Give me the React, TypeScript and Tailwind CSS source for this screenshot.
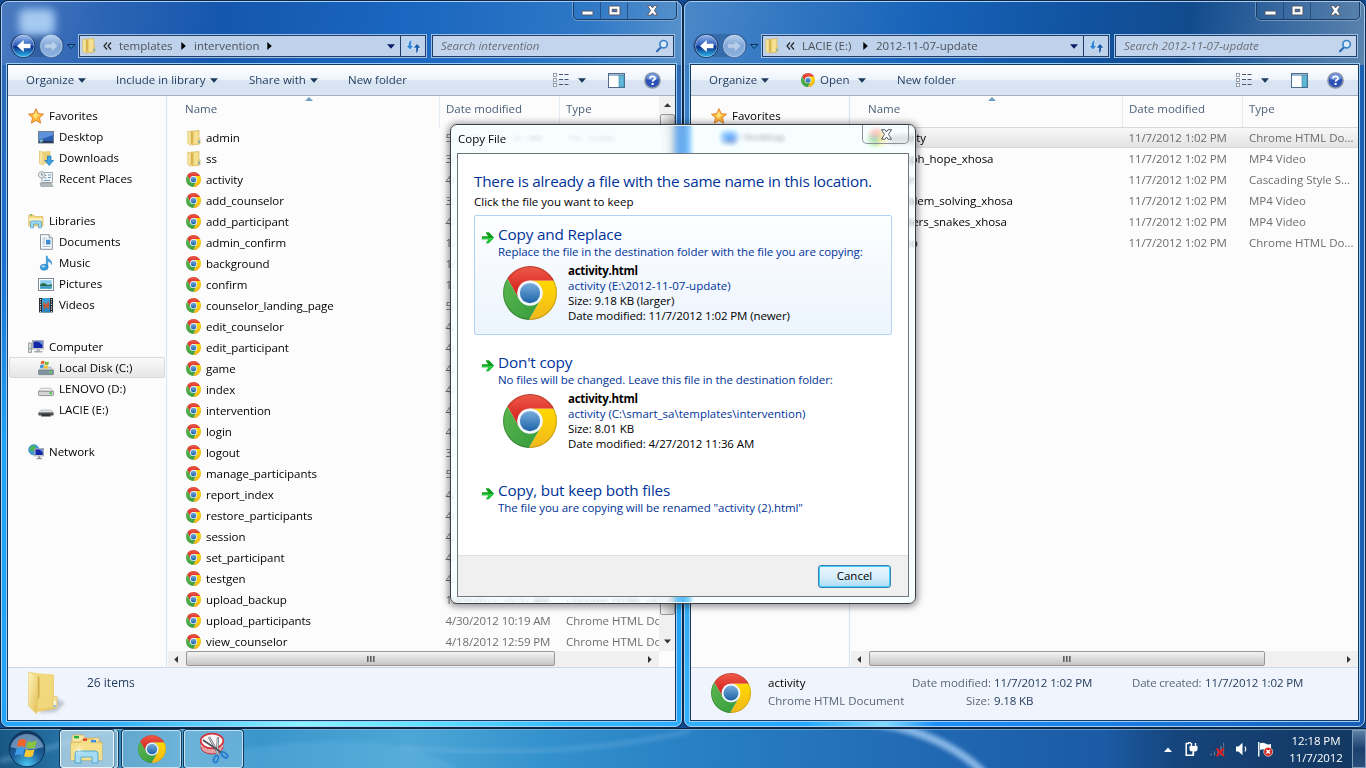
import React from "react";
import type { ReactNode } from "react";

/* ---------- icons ---------- */

function Chrome({ size }: { size: number }) {
  return (
    <svg width={size} height={size} viewBox="0 0 48 48" className="shrink-0">
      <defs>
        <linearGradient id="cr" x1="0" y1="0" x2="0" y2="1">
          <stop offset="0" stopColor="#ee5a48" />
          <stop offset="1" stopColor="#cf1514" />
        </linearGradient>
        <linearGradient id="cy" x1="0" y1="0" x2="0" y2="1">
          <stop offset="0" stopColor="#ffd800" />
          <stop offset="1" stopColor="#f2b81c" />
        </linearGradient>
        <linearGradient id="cg" x1="0" y1="0" x2="1" y2="1">
          <stop offset="0" stopColor="#5cb84f" />
          <stop offset="1" stopColor="#359a3c" />
        </linearGradient>
        <linearGradient id="cb" x1="0" y1="0" x2="0" y2="1">
          <stop offset="0" stopColor="#7aaedc" />
          <stop offset="1" stopColor="#1d63a8" />
        </linearGradient>
      </defs>
      <path d="M3.82 11.05A24 24 0 0 1 45.3 13L24 13A11 11 0 0 0 14.47 29.5Z" fill="url(#cr)" />
      <path d="M45.3 13A24 24 0 0 1 22.88 47.95L33.53 29.5A11 11 0 0 0 24 13Z" fill="url(#cy)" />
      <path d="M22.88 47.95A24 24 0 0 1 3.82 11.05L14.47 29.5A11 11 0 0 0 33.53 29.5Z" fill="url(#cg)" />
      <circle cx="24" cy="24" r="11.2" fill="#f4f7fb" />
      <circle cx="24" cy="24" r="9" fill="url(#cb)" />
      <circle cx="24" cy="24" r="23.5" fill="none" stroke="#00000030" strokeWidth="1" />
    </svg>
  );
}

function Folder({ w = 16, h = 16 }: { w?: number; h?: number }) {
  return (
    <svg width={w} height={h} viewBox="0 0 16 16" className="shrink-0">
      <path d="M5 1.2L13 .6V14L6 15Z" fill="#ecd074" stroke="#cfac4c" strokeWidth=".6" />
      <path d="M8.2 1.5L12.4 1.2V13.5L8.2 14.2Z" fill="#f5e191" />
      <path d="M1.8 1L5.2 1.8V10.5L5 15.3L1.8 13.5Z" fill="#f6e59c" stroke="#d6b658" strokeWidth=".6" />
      <path d="M5.2 1.8L6.8 2.8V12L5.2 14.6Z" fill="#d3ad48" />
      <path d="M12 9.2L14.2 8.8V13.7L12 14.4Z" fill="#f3dd8b" stroke="#cfac4c" strokeWidth=".4" />
      <path d="M13.1 10.4V13.2" stroke="#3b9bdc" strokeWidth="1.1" />
    </svg>
  );
}

function BigFolder() {
  return (
    <svg width="40" height="44" viewBox="0 0 40 44" className="shrink-0">
      <defs>
        <linearGradient id="bf1" x1="0" y1="0" x2="1" y2="1">
          <stop offset="0" stopColor="#fff4c0" />
          <stop offset="1" stopColor="#e2bd4e" />
        </linearGradient>
        <linearGradient id="bf2" x1="0" y1="0" x2="1" y2="1">
          <stop offset="0" stopColor="#f5dd87" />
          <stop offset="1" stopColor="#e7c765" />
        </linearGradient>
        <filter id="bfb"><feGaussianBlur stdDeviation="1.6" /></filter>
      </defs>
      <path d="M28 26L38 32L29 41L12 42Z" fill="#8f97a8" opacity=".5" filter="url(#bfb)" />
      <path d="M2 1L27 4V38L10 41Z" fill="url(#bf2)" />
      <path d="M9 3H26V36L11 38Z" fill="#f2d97f" opacity=".8" />
      <path d="M1.5 1L11 5V28L9.5 43L1.5 35Z" fill="url(#bf1)" stroke="#e6cb72" strokeWidth=".6" />
      <path d="M11 5L12.5 7V26L11 28Z" fill="#cfa943" />
      <path d="M26 26L30 25V36L26 38Z" fill="#f3df94" stroke="#dcc068" strokeWidth=".6" />
      <path d="M27.6 30V36" stroke="#fff" strokeWidth="1.6" />
      <path d="M27.6 34V36" stroke="#57a9e4" strokeWidth="1.6" />
    </svg>
  );
}

function Svg16({ children }: { children: ReactNode }) {
  return (
    <svg width="16" height="16" viewBox="0 0 16 16" className="shrink-0">
      {children}
    </svg>
  );
}

function Drive({ top, side, led }: { top: string; side: string; led: string }) {
  return (
    <>
      <path d="M3.2 7.2H12.8L15.6 10.4H.4Z" fill={top} stroke="#8a8d90" strokeWidth=".5" />
      <rect x=".4" y="10.2" width="15.2" height="4.4" rx="1.2" fill={side} stroke="#6d7073" strokeWidth=".7" />
      <rect x="11.6" y="11.2" width="2.2" height="2" fill={led} />
    </>
  );
}

const navIcons: Record<string, ReactNode> = {
  Favorites: (
    <Svg16>
      <path d="M8 .7L10.2 5.6L15.5 6.2L11.5 9.8L12.6 15.2L8 12.4L3.4 15.2L4.5 9.8L.5 6.2L5.8 5.6Z" fill="#fdb53a" stroke="#e07b26" strokeWidth=".9" />
      <path d="M8 3L9.4 6.5L12.6 7L9 8.2L8 11L5 8Z" fill="#ffe377" />
    </Svg16>
  ),
  Desktop: (
    <Svg16>
      <rect x=".5" y="2.5" width="15" height="11.5" fill="#2c5fb4" stroke="#6f7c8c" />
      <path d="M1 3H15V6L1 11Z" fill="#5c93dc" />
      <rect x="1" y="12" width="14" height="1.8" fill="#26364f" />
      <circle cx="3" cy="12" r="1.5" fill="#77b8d8" />
      <rect x="4" y="10.8" width="1" height="1" fill="#f5d93b" />
    </Svg16>
  ),
  Downloads: (
    <Svg16>
      <path d="M5 1.4L12.5 1V12.5L6 14Z" fill="#ecd074" />
      <path d="M1.5 1L5.2 2.2V15L1.5 13.3Z" fill="#f6e59c" stroke="#d6b658" strokeWidth=".6" />
      <path d="M9.4 6H13V10.5H15.6L11.2 15.5L6.8 10.5H9.4Z" fill="#3fa4e2" stroke="#1b74b5" strokeWidth=".7" />
    </Svg16>
  ),
  "Recent Places": (
    <Svg16>
      <path d="M4 1.5H14.5V11.5H4Z" fill="#f3f6f8" stroke="#8c9499" strokeWidth=".8" />
      <path d="M6.5 4.5H8.5M10 4H13M6.5 7H8.5M10 6.5H13M6 9.5H12" stroke="#6b9dc4" strokeWidth="1.2" />
      <path d="M2 12H13L15 15.4H3Z" fill="#b5bcc0" stroke="#858c90" strokeWidth=".6" />
      <circle cx="3.6" cy="3.8" r="3.2" fill="#e7edf0" stroke="#8a9499" strokeWidth=".8" />
      <path d="M3.6 2V4H5" stroke="#4f5b63" strokeWidth=".7" fill="none" />
    </Svg16>
  ),
  Libraries: (
    <Svg16>
      <path d="M.8 2.2H6L7 3.6H15V13H.8Z" fill="#f1d67a" stroke="#d2ad49" strokeWidth=".6" />
      <path d="M1.5 5H14.5V8H1.5Z" fill="#fcf1bd" />
      <path d="M2 1.8H4" stroke="#46a83c" strokeWidth="1" />
      <path d="M2.5 14.8V9.5Q2.5 8 4 8H12Q13.5 8 13.5 9.5V14.8H10.5V11H5.5V14.8Z" fill="#9ad7f2" stroke="#4a9fc8" strokeWidth=".7" />
    </Svg16>
  ),
  Documents: (
    <Svg16>
      <path d="M2.5 .7H11L14.3 4V15.3H2.5Z" fill="#fbfdff" stroke="#7c8792" strokeWidth=".9" />
      <path d="M11 .7V4H14.3" fill="#dce5ee" stroke="#7c8792" strokeWidth=".7" />
      <path d="M4.5 4H9M4.5 6H7M4.5 8H7M4.5 10H7M4.5 12.5H12.5" stroke="#93a5bb" strokeWidth=".8" />
      <rect x="8" y="5.7" width="4.5" height="4.8" fill="#3b8ad2" />
    </Svg16>
  ),
  Music: (
    <Svg16>
      <path d="M8 .8C9 4 14.5 4.5 13.6 9.5C13 7.5 11.5 6.5 9.8 6.3V12.2" fill="#48a4e0" stroke="#277db9" strokeWidth=".5" />
      <path d="M7.9 .8H9.8V12.5H7.9Z" fill="#48a4e0" />
      <ellipse cx="6.2" cy="12.2" rx="3.9" ry="3" fill="#3b9ee0" stroke="#1d6fae" strokeWidth=".6" />
      <ellipse cx="5.2" cy="11.3" rx="1.8" ry="1.1" fill="#a5d9f7" />
    </Svg16>
  ),
  Pictures: (
    <Svg16>
      <rect x=".5" y="2.5" width="15" height="12" fill="#fff" stroke="#7f8b96" />
      <rect x="2.2" y="4.2" width="11.6" height="8.6" fill="#8fcdee" />
      <path d="M2.2 8L6 7L10 9.3L13.8 8V10.5H2.2Z" fill="#276a4c" />
      <path d="M2.2 10.5H13.8V12.8H2.2Z" fill="#3f9fd0" />
    </Svg16>
  ),
  Videos: (
    <Svg16>
      <rect x="1" y="1" width="14" height="14.4" fill="#20262e" />
      <rect x="4" y="1" width="8" height="7" fill="#3e9fd8" />
      <rect x="4" y="8.4" width="8" height="7" fill="#2d86c0" />
      <path d="M5 5L8 7L11 4V12L8 10L6 13Z" fill="#c05c35" />
      <path d="M2.5 2V15M13.5 2V15" stroke="#d6dde2" strokeWidth="1.2" strokeDasharray="1.2 1.2" />
    </Svg16>
  ),
  Computer: (
    <Svg16>
      <rect x="0.6" y="4" width="3" height="9.5" fill="#d9dde0" stroke="#7f868b" strokeWidth=".7" />
      <rect x="1.4" y="9" width="1.2" height="1.2" fill="#49b14a" />
      <rect x="4.4" y="1.4" width="11.2" height="8.6" fill="#dfe3e6" stroke="#878e93" strokeWidth=".6" />
      <rect x="5.4" y="2.4" width="9.2" height="6.6" fill="#1226a6" />
      <path d="M10 2.4H14.6V6Z" fill="#6f93e8" />
      <path d="M9 10.3H11.5L12 12H14.5V13.5H6V12H8.5Z" fill="#a7adb2" />
    </Svg16>
  ),
  "Local Disk (C:)": (
    <Svg16>
      <Drive top="#c3d4dc" side="#7e94a0" led="#5ce04c" />
      <path d="M3.2 1.2Q5 .2 6.6 1.2L6 4.2Q4.4 3.4 2.6 4.2Z" fill="#e8622c" />
      <path d="M7.2 1.6Q9 2.6 11 1.5L10.4 4.6Q8.6 5.6 6.6 4.6Z" fill="#7cbb3d" />
      <path d="M2.4 4.9Q4.2 4 5.8 4.9L5.2 8Q3.6 7.2 1.8 8Z" fill="#3b8fd9" />
      <path d="M6.4 5.3Q8.2 6.3 10.2 5.2L9.6 8.2Q7.8 9.2 5.8 8.2Z" fill="#f7c431" />
    </Svg16>
  ),
  "LENOVO (D:)": (
    <Svg16>
      <Drive top="#f0f1f2" side="#d3d5d7" led="#3fc23a" />
    </Svg16>
  ),
  "LACIE (E:)": (
    <Svg16>
      <path d="M3 8H13L15.6 10.8H.4Z" fill="#e0e1e2" stroke="#98999b" strokeWidth=".5" />
      <rect x=".4" y="10.6" width="15.2" height="3" rx="1.2" fill="#4d5053" />
      <path d="M4 12.2H12L13 14.5H3Z" fill="#303336" />
    </Svg16>
  ),
  Network: (
    <Svg16>
      <circle cx="5.8" cy="5.8" r="5.2" fill="#3d9bd8" stroke="#2b7cad" strokeWidth=".5" />
      <path d="M2 3Q5 1 8 1.5Q6 4 7 6Q4 8 2 7Z" fill="#48b74d" />
      <rect x="6.5" y="4.4" width="9.2" height="7.6" fill="#dfe3e6" stroke="#878e93" strokeWidth=".6" />
      <rect x="7.4" y="5.3" width="7.4" height="5.7" fill="#1226a6" />
      <path d="M11 5.3H14.8V8.5Z" fill="#6f93e8" />
      <path d="M10.2 12.3H12.2V14H14V15.3H8.5V14H10.2Z" fill="#8d949a" />
    </Svg16>
  ),
};

function Down({ w = 8, color = "#1e395b" }: { w?: number; color?: string }) {
  return (
    <svg width={w} height="5" viewBox="0 0 8 5" className="shrink-0">
      <path d="M0 .3H8L4 4.7Z" fill={color} />
    </svg>
  );
}

function GreenArrow() {
  return (
    <svg width="14" height="14" viewBox="0 0 14 14" className="shrink-0">
      <path d="M1 6.1H8.6L5 2.4H7.8L12.6 7.2L7.8 12.2H5L8.6 8.3H1Z" fill="#8a9a8a" opacity=".35" transform="translate(-.6 1)" />
      <path d="M1 5.5H7.6L4.8 1.6H8L13 6.8L8 12H4.8L7.6 8.3H1Z" fill="#14c02c" />
      <path d="M1 5.5H7.6L4.8 1.6H8L13 6.8H1Z" fill="#119a1c" />
      <path d="M1.5 7H11L7.5 10.8L9 7.8H1.5Z" fill="#35e052" />
    </svg>
  );
}

function Play() {
  return (
    <svg width="5" height="8" viewBox="0 0 5 8" className="shrink-0">
      <path d="M.3 0L4.8 4L.3 8Z" fill="#000" />
    </svg>
  );
}

function CaptionGlyph({ kind }: { kind: "min" | "max" | "close" }) {
  return (
    <svg width="13" height="11" viewBox="0 0 13 11">
      {kind === "min" && <rect x="1" y="6" width="11" height="4" rx=".6" fill="#fff" stroke="#535666" strokeWidth="1" />}
      {kind === "max" && (
        <>
          <rect x="1" y="1" width="11" height="9" rx=".6" fill="#fff" stroke="#535666" strokeWidth="1" />
          <rect x="4.3" y="4.3" width="4.4" height="2.4" fill="#3c73b8" stroke="#535666" strokeWidth="1" />
        </>
      )}
      {kind === "close" && (
        <path d="M1.5 .7H5L6.5 2.9L8 .7H11.5L8.5 5.4L11.5 10.2H8L6.5 8L5 10.2H1.5L4.5 5.4Z" fill="#fff" stroke="#535666" strokeWidth="1" />
      )}
    </svg>
  );
}

/* ---------- explorer window ---------- */

const navRows: { label: string; level: number; selected?: boolean }[] = [
  { label: "Favorites", level: 0 },
  { label: "Desktop", level: 1 },
  { label: "Downloads", level: 1 },
  { label: "Recent Places", level: 1 },
  { label: "", level: 0 },
  { label: "Libraries", level: 0 },
  { label: "Documents", level: 1 },
  { label: "Music", level: 1 },
  { label: "Pictures", level: 1 },
  { label: "Videos", level: 1 },
  { label: "", level: 0 },
  { label: "Computer", level: 0 },
  { label: "Local Disk (C:)", level: 1, selected: true },
  { label: "LENOVO (D:)", level: 1 },
  { label: "LACIE (E:)", level: 1 },
  { label: "", level: 0 },
  { label: "Network", level: 0 },
];

function NavPane({ rows }: { rows: typeof navRows }) {
  return (
    <div className="w-[159px] shrink-0 border-r border-[#d6e5f5] bg-[#fcfcfc] pt-[9px]">
      {rows.map((r, i) => (
        <div
          key={i}
          className={
            "ml-px mr-px flex h-[21px] items-center gap-[5px] " +
            (r.level ? "pl-[29px] " : "pl-[19px] ") +
            (r.selected ? "rounded-[2px] border border-[#d9d9d9] bg-linear-to-b from-[#fafafa] to-[#e6e6e6] !pl-[28px]" : "")
          }
        >
          {navIcons[r.label]}
          <span className="whitespace-nowrap text-black">{r.label}</span>
        </div>
      ))}
    </div>
  );
}

type FileRow = { icon?: "folder" | "chrome" | "video"; name: string; date: string; type: string; selected?: boolean };

function HScroll({ wide }: { wide?: boolean }) {
  return (
    <div className="flex h-4 bg-[#f0f0f0]">
      <div className="flex w-[18px] items-center pl-[6px]">
        <svg width="4" height="7" viewBox="0 0 4 7"><path d="M4 0V7L.3 3.5Z" fill="#333" /></svg>
      </div>
      <div
        className={
          (wide ? "w-[396px] " : "w-[369px] ") +
          "flex h-[15px] items-center justify-center gap-px rounded-[2px] border border-[#979797] bg-linear-to-b from-[#f4f4f4] via-[#dcdcdc] to-[#c4c4c4]"
        }
      >
        <i className="h-[6px] w-[2px] bg-linear-to-r from-[#4a4a4a] to-[#a5a5a5]" />
        <i className="h-[6px] w-[2px] bg-linear-to-r from-[#4a4a4a] to-[#a5a5a5]" />
        <i className="h-[6px] w-[2px] bg-linear-to-r from-[#4a4a4a] to-[#a5a5a5]" />
      </div>
      <div className="flex grow items-center justify-end pr-[7px]">
        <svg width="4" height="7" viewBox="0 0 4 7"><path d="M0 0V7L3.7 3.5Z" fill="#333" /></svg>
      </div>
    </div>
  );
}

function VScroll() {
  return (
    <div className="flex h-[555px] w-4 shrink-0 flex-col items-center bg-[#f0f0f0]">
      <div className="flex h-[18px] items-center">
        <svg width="7" height="4" viewBox="0 0 7 4"><path d="M0 4H7L3.5 .3Z" fill="#333" /></svg>
      </div>
      <div className="h-[501px] w-[15px] rounded-[2px] border border-[#979797] bg-linear-to-r from-[#f4f4f4] via-[#dcdcdc] to-[#c4c4c4]" />
      <div className="flex grow items-end pb-[7px]">
        <Down w={7} color="#333" />
      </div>
    </div>
  );
}

function FileList({ rows, scroll }: { rows: FileRow[]; scroll: boolean }) {
  return (
    <div className="flex grow flex-col bg-[#fcfcfc]">
      <div className="flex h-[555px]">
        <div className="w-0 grow overflow-hidden">
          <div className="flex h-[31px] text-[#4c607a]">
            <div className="relative flex w-[273px] shrink-0 border-r border-[#e3ebf5] pl-[18px] pt-[5px]">
              Name
              <svg width="8" height="4" viewBox="0 0 8 4" className="absolute left-[138px] top-px">
                <path d="M0 4H8L4 0Z" fill="#6aa0c4" />
              </svg>
            </div>
            <div className="w-[120px] shrink-0 border-r border-[#e3ebf5] pl-[6px] pt-[5px]">Date modified</div>
            <div className="pl-[6px] pt-[5px]">Type</div>
          </div>
          {rows.map((r) => (
            <div
              key={r.name}
              className={
                "flex h-[21px] items-center whitespace-nowrap pl-[19px] text-[#6d6d6d] " +
                (r.selected ? "border-y border-[#d9d9d9] bg-linear-to-b from-[#f8f8f8] to-[#e3e3e3]" : "")
              }
            >
              <div className="flex w-5 shrink-0 items-center">
                {r.icon === "folder" ? (
                  <Folder />
                ) : r.icon === "video" ? (
                  <svg width="14" height="14" viewBox="0 0 14 14">
                    <path d="M1 3H13V12H1Z" fill="#dce6f2" stroke="#9ab" />
                  </svg>
                ) : (
                  <Chrome size={15} />
                )}
              </div>
              <span className="w-[239.5px] shrink-0 tracking-[-0.05px] text-black">{r.name}</span>
              <span className="w-[120.5px] shrink-0 tracking-[-0.13px]">{r.date}</span>
              <span>{r.type}</span>
            </div>
          ))}
        </div>
        {scroll && <VScroll />}
      </div>
      <div className="flex">
        <div className="w-0 grow pl-px">
          <HScroll wide={!scroll} />
        </div>
        {scroll && <div className="w-4" />}
      </div>
    </div>
  );
}

function ExplorerWindow(props: {
  place: string;
  tint: string;
  address: ReactNode;
  search: string;
  tools: ReactNode;
  nav: typeof navRows;
  rows: FileRow[];
  scroll: boolean;
  details: ReactNode;
}) {
  return (
    <section
      className={
        "absolute top-px flex h-[726px] w-[681px] flex-col rounded-[7px] border border-[#a9cdf0] px-1 pb-1 shadow-[0_0_0_1px_#0d2a4d] " +
        props.place +
        " " +
        props.tint
      }
    >
      <div className="flex h-[61px] shrink-0 flex-col">
        <div className="flex h-[18px] justify-end">
          <div className="flex h-[18px] w-[104px] rounded-b-[5px] border border-t-0 border-[#1c3c66] shadow-[0_0_0_1px_#9dbfe088]">
            <div className="flex w-[27px] items-center justify-center border-r border-[#1c3c66aa]"><CaptionGlyph kind="min" /></div>
            <div className="flex w-[27px] items-center justify-center border-r border-[#1c3c66aa]"><CaptionGlyph kind="max" /></div>
            <div className="flex grow items-center justify-center"><CaptionGlyph kind="close" /></div>
          </div>
        </div>
        <div className="mt-[14px] flex h-6 items-center">
          <svg width="72" height="26" viewBox="0 0 72 26" className="-ml-px -mt-px shrink-0 overflow-visible">
            <defs>
              <linearGradient id="back" x1="0" y1="0" x2="0" y2="1">
                <stop offset="0" stopColor="#9ab9ec" />
                <stop offset=".48" stopColor="#2c5cbc" />
                <stop offset=".52" stopColor="#0a2c86" />
                <stop offset="1" stopColor="#2fc2f5" />
              </linearGradient>
              <linearGradient id="fwd" x1="0" y1="0" x2="0" y2="1">
                <stop offset="0" stopColor="#b8d0ee" />
                <stop offset=".5" stopColor="#7fa6d8" />
                <stop offset="1" stopColor="#8fb4e0" />
              </linearGradient>
            </defs>
            <rect x="5" y="1" width="54" height="23" rx="11.5" fill="#1b3e7455" />
            <circle cx="18.3" cy="13" r="11.6" fill="url(#back)" stroke="#16305c" />
            <circle cx="18.3" cy="13" r="10.8" fill="none" stroke="#c5dcf5aa" strokeWidth=".8" />
            <path d="M18.8 7L12 13L18.8 19V15.2H25.5V10.8H18.8Z" fill="#fff" />
            <circle cx="46.3" cy="13" r="11.6" fill="url(#fwd)" stroke="#3a5f94" />
            <circle cx="46.3" cy="13" r="10.8" fill="none" stroke="#d5e4f7aa" strokeWidth=".8" />
            <path d="M46.3 7L53 13L46.3 19V15.2H39.5V10.8H46.3Z" fill="#b9cfe9" stroke="#84a6d3" strokeWidth=".6" />
            <path d="M62.5 11.5H70L66.2 15.5Z" fill="#2e86cf" stroke="#0b2747" strokeWidth=".9" />
          </svg>
          <div className="ml-[1px] flex h-6 w-[349px] items-center border border-[#9dc0e8] bg-[#bfd2ec] shadow-[inset_0_0_0_1px_#203d68]">
            <div className="flex grow items-center pl-[2px] text-[#4b5258]">{props.address}</div>
            <div className="flex h-full w-[26px] shrink-0 items-center justify-center border-l border-[#203d68]">
              <svg width="17" height="17" viewBox="0 0 17 17">
                <path d="M7.5 1.8Q3 2.5 3.2 7.4H.8L5 12L9 7.4H6.4Q6 4 7.5 1.8Z" fill="#2f86d6" stroke="#eaf3fc" strokeWidth=".7" />
                <path d="M10 16Q14 14.5 13.6 10H16.2L12 5.4L8 10H10.6Q11.3 13 10 16Z" fill="#1f5fb0" stroke="#eaf3fc" strokeWidth=".7" />
              </svg>
            </div>
          </div>
          <div className="ml-[4px] flex h-6 w-[244px] items-center justify-between border border-[#9dc0e8] bg-[#c3d5ec] pl-[9px] pr-[5px] italic text-[#6b6f75] shadow-[inset_0_0_0_1px_#203d68]">
            <span className="whitespace-nowrap">{props.search}</span>
            <svg width="14" height="14" viewBox="0 0 14 14">
              <path d="M2 12.2L6.2 8" stroke="#2f6db5" strokeWidth="2.2" strokeLinecap="round" />
              <circle cx="8.6" cy="5.2" r="3.7" fill="#dcebfa" stroke="#3c82c8" strokeWidth="1.7" />
            </svg>
          </div>
        </div>
      </div>
      <div className="grow border border-[#9ccdf2]">
        <div className="h-full border border-[#163a66] bg-white">
          <div className="flex h-[31px] items-center border-b border-[#a0afc3] bg-linear-to-b from-white from-0% via-[#edf4fc] via-50% to-[#d9e4f3] to-52% pl-[18px] text-[#1e395b]">
            {props.tools}
            <div className="ml-auto flex items-center pr-[14px]">
              <svg width="16" height="14" viewBox="0 0 16 14">
                {[0, 5, 10].map((y) => (
                  <g key={y}>
                    <rect x=".5" y={y + 0.5} width="3" height="3" fill="#fff" stroke="#7d8794" strokeWidth=".8" />
                    <path d={`M6 ${y + 1.5}H10M11.5 ${y + 1.5}H15.5`} stroke="#47566b" strokeWidth="1" />
                  </g>
                ))}
              </svg>
              <div className="ml-[9px]"><Down /></div>
              <svg width="17" height="15" viewBox="0 0 17 15" className="ml-[22px]">
                <rect x=".5" y=".5" width="16" height="14" fill="#fff" stroke="#4e6b8c" />
                <rect x="1" y="1" width="15" height="2" fill="#9db7d0" />
                <rect x="11" y="2.5" width="5" height="11.5" fill="#5fb8d8" stroke="#3d7f9f" strokeWidth=".6" />
              </svg>
              <svg width="17" height="17" viewBox="0 0 17 17" className="ml-[19px]">
                <circle cx="8.5" cy="8.5" r="7.6" fill="#2b50b8" stroke="#8d96a5" strokeWidth="1.5" />
                <path d="M2.5 7A6 6 0 0 1 14.5 7Q8.5 9 2.5 7Z" fill="#6f93dd" />
                <path d="M6 6.5Q6 4.3 8.5 4.3T11 6.4Q11 7.6 9.4 8.3Q8.6 8.7 8.6 9.8" fill="none" stroke="#fff" strokeWidth="1.8" />
                <rect x="7.6" y="11" width="2" height="2" fill="#fff" />
              </svg>
            </div>
          </div>
          <div className="flex h-[571px]">
            <NavPane rows={props.nav} />
            <FileList rows={props.rows} scroll={props.scroll} />
          </div>
          <div className="flex h-[53px] border-t border-[#ccd7ea] bg-[#f0f4fc] text-[#1e395b]">{props.details}</div>
        </div>
      </div>
    </section>
  );
}

/* ---------- data ---------- */

const chromeType = "Chrome HTML Do...";

const leftRows: FileRow[] = [
  { icon: "folder", name: "admin", date: "5/1/2012 11:25 AM", type: "File folder" },
  { icon: "folder", name: "ss", date: "3/", type: "" },
  ...(
    [
      ["activity", "4"], ["add_counselor", "3"], ["add_participant", "4"], ["admin_confirm", "1"],
      ["background", "1"], ["confirm", "1"], ["counselor_landing_page", "5"], ["edit_counselor", "4"],
      ["edit_participant", "4"], ["game", "4"], ["index", "4"], ["intervention", "4"], ["login", "4"],
      ["logout", "3"], ["manage_participants", "5"], ["report_index", "4"], ["restore_participants", "4"],
      ["session", "4"], ["set_participant", "4"], ["testgen", "4"],
    ] as [string, string][]
  ).map(([name, d]): FileRow => ({ name, date: d + "/", type: "" })),
  { name: "upload_backup", date: "10/9/2012 10:37 AM", type: "Chrome HTML Document" },
  { name: "upload_participants", date: "4/30/2012 10:19 AM", type: "Chrome HTML Document" },
  { name: "view_counselor", date: "4/18/2012 12:59 PM", type: "Chrome HTML Document" },
];

const stamp = "11/7/2012 1:02 PM";

const rightRows: FileRow[] = [
  { name: "activity", date: stamp, type: chromeType, selected: true },
  { icon: "video", name: "joseph_hope_xhosa", date: stamp, type: "MP4 Video" },
  { icon: "video", name: "main", date: stamp, type: "Cascading Style S..." },
  { icon: "video", name: "problem_solving_xhosa", date: stamp, type: "MP4 Video" },
  { icon: "video", name: "ladders_snakes_xhosa", date: stamp, type: "MP4 Video" },
  { name: "video", date: stamp, type: "Chrome HTML Do..." },
];

/* ---------- dialog ---------- */

function Choice(props: { title: string; sub: string; active?: boolean; file?: [string, string, string]; gap?: string }) {
  return (
    <div
      className={
        "flex h-[120px] w-[418px] rounded-[2px] border pl-[6px] pt-[9px] " +
        (props.gap ?? "") +
        (props.active ? " border-[#b3d3f5] bg-linear-to-b from-[#fdfeff] to-[#ecf4fd]" : " border-transparent")
      }
    >
      <div className="pt-[6px]"><GreenArrow /></div>
      <div className="ml-[3px] whitespace-nowrap">
        <div className="h-[19px] text-[15.3px] leading-[18px] tracking-[-0.18px] text-[#003399]">{props.title}</div>
        <div className="h-[20px] leading-[16px] tracking-[-0.07px] text-[#003399]">{props.sub}</div>
        {props.file && (
          <div className="flex">
            <div className="ml-[5px] mt-[2px]"><Chrome size={54} /></div>
            <div className="-mt-px ml-[11px] leading-[15px] tracking-[-0.1px] text-black">
              <div className="font-bold tracking-[-0.3px]">activity.html</div>
              <div className="tracking-[0px] text-[#003399]">{props.file[0]}</div>
              <div>{props.file[1]}</div>
              <div>{props.file[2]}</div>
            </div>
          </div>
        )}
      </div>
    </div>
  );
}

function CopyDialog() {
  return (
    <section className="absolute left-[450px] top-[124px] flex h-[480px] w-[466px] flex-col rounded-[7px] border border-[#3a3f44] bg-[#e2fbff50] px-[6px] pb-[6px] shadow-[0_1px_7px_2px_#00000066,inset_0_0_0_1px_#ffffffd0] backdrop-blur-[3px] backdrop-brightness-110 backdrop-saturate-150">
      <header className="flex h-7 shrink-0 justify-between">
        <span className="pl-px pt-[6px] text-black [text-shadow:0_0_6px_#fff,0_0_8px_#fff]">Copy File</span>
        <div className="flex h-[19px] w-[47px] items-center justify-center rounded-b-[5px] border border-t-0 border-[#8b9196] bg-[#ffffff30] pl-px">
          <CaptionGlyph kind="close" />
        </div>
      </header>
      <div className="flex w-[452px] grow flex-col border border-[#6f7579] bg-white">
        <div className="grow pl-4 pt-[17px]">
          <h1 className="h-[21px] whitespace-nowrap text-[15.3px] leading-[20px] tracking-[-0.235px] text-[#003399]">
            There is already a file with the same name in this location.
          </h1>
          <p className="mb-[4px] h-[19px] leading-[20px] text-black">Click the file you want to keep</p>
          <Choice
            active
            title="Copy and Replace"
            sub="Replace the file in the destination folder with the file you are copying:"
            file={["activity (E:\\2012-11-07-update)", "Size: 9.18 KB (larger)", "Date modified: 11/7/2012 1:02 PM (newer)"]}
          />
          <Choice
            gap="mt-[8px]"
            title="Don't copy"
            sub="No files will be changed. Leave this file in the destination folder:"
            file={["activity (C:\\smart_sa\\templates\\intervention)", "Size: 8.01 KB", "Date modified: 4/27/2012 11:36 AM"]}
          />
          <Choice gap="mt-[8px] !h-[50px]" title="Copy, but keep both files" sub={'The file you are copying will be renamed "activity (2).html"'} />
        </div>
        <footer className="flex h-[41px] items-center justify-end border-t border-[#dfdfdf] bg-[#f0f0f0] pr-[17px]">
          <button className="h-[23px] w-[73px] rounded-[3px] border border-[#3c7fb1] bg-linear-to-b from-[#e9f6fd] from-0% via-[#d8effc] via-50% to-[#aedcf4] text-black shadow-[inset_0_0_0_1px_#3fd0fa]">
            Cancel
          </button>
        </footer>
      </div>
    </section>
  );
}

/* ---------- taskbar ---------- */

function StartOrb() {
  return (
    <svg width="38" height="38" viewBox="0 0 38 38">
      <defs>
        <radialGradient id="orb" cx=".5" cy=".95" r=".9">
          <stop offset="0" stopColor="#49c6f0" />
          <stop offset=".5" stopColor="#1d5f9c" />
          <stop offset="1" stopColor="#123a68" />
        </radialGradient>
      </defs>
      <circle cx="19" cy="19" r="17.8" fill="url(#orb)" stroke="#0f3357" strokeWidth="1" />
      <path d="M2.5 17A17 17 0 0 1 35.5 17Q19 22 2.5 17Z" fill="#a9c8e2" opacity=".55" />
      <path d="M10.5 10.2Q14.5 8 18.3 10.3L16.8 17Q12.8 15 8.8 17Z" fill="#f0652b" />
      <path d="M19.7 11Q24 13 28.8 10.6L27 17.6Q22.6 19.6 18.2 17.6Z" fill="#8ac23f" />
      <path d="M8.4 18.7Q12.4 16.6 16.4 18.7L14.7 25.6Q10.8 23.6 6.8 25.6Z" fill="#3f9be8" />
      <path d="M17.8 19.3Q22 21.4 26.6 19.2L24.8 26Q20.6 28.3 16.1 26.2Z" fill="#fbc834" />
    </svg>
  );
}

function ExplorerTaskIcon() {
  return (
    <svg width="36" height="34" viewBox="0 0 36 34">
      <path d="M3 6Q3 3 5 3H14L16 6H30V12H3Z" fill="#f7e7a6" stroke="#cfae55" strokeWidth=".7" />
      <path d="M2 10H12L14 7H24L26 10H33V28H2Z" fill="#f3dc86" stroke="#d0ab4b" strokeWidth=".8" />
      <path d="M2 12H33V28H2Z" fill="#f6e08c" />
      <rect x="5" y="4" width="5" height="2.4" fill="#22b13c" />
      <rect x="14" y="6.5" width="4" height="2.4" fill="#e0402e" />
      <rect x="22" y="8" width="5" height="2.4" fill="#3a8fe0" />
      <path d="M6 31V22Q6 19 9 19H26Q29 19 29 22V31H23V25H12V31Z" fill="#a5dcf3" stroke="#4aa3cc" strokeWidth=".9" />
      <path d="M10 13V23M5 18H15M6.5 14.5L13.5 21.5M13.5 14.5L6.5 21.5" stroke="#fff" strokeWidth=".5" opacity=".9" />
    </svg>
  );
}

function SnipIcon() {
  return (
    <svg width="34" height="34" viewBox="0 0 34 34">
      <ellipse cx="15" cy="15" rx="11" ry="7" fill="#e5a0a4" stroke="#c93038" strokeWidth="1" />
      <path d="M4 9V15H26V9Z" fill="#eec6c9" />
      <ellipse cx="15" cy="9" rx="11.3" ry="7.3" fill="#f9f4f5" stroke="#d6343c" strokeWidth="1.7" />
      <path d="M12 5L22 23M21 5L20 22" stroke="#5a5f66" strokeWidth="2.2" />
      <path d="M12 5L22 23M21 5L20 22" stroke="#d5dade" strokeWidth="1" />
      <path d="M6 8L25 21" stroke="#4a5058" strokeWidth="1.6" />
      <ellipse cx="19" cy="27" rx="2.1" ry="3.6" transform="rotate(22 19 27)" fill="none" stroke="#2a7fd0" strokeWidth="2" />
      <ellipse cx="27.5" cy="23" rx="2.1" ry="3.6" transform="rotate(-50 27.5 23)" fill="none" stroke="#2a7fd0" strokeWidth="2" />
    </svg>
  );
}

function Taskbar() {
  return (
    <footer className="absolute left-0 top-[728px] h-10 w-full overflow-hidden border-t border-[#0c2440]">
      <svg className="absolute inset-0" width="1366" height="39" viewBox="0 0 1366 39" preserveAspectRatio="none">
        <defs>
          <linearGradient id="tb" x1="0" y1="0" x2="1" y2="0">
            <stop offset="0" stopColor="#195783" />
            <stop offset=".045" stopColor="#2572a4" />
            <stop offset=".13" stopColor="#4ba3d1" />
            <stop offset=".19" stopColor="#3a95cb" />
            <stop offset=".3" stopColor="#4da6d6" />
            <stop offset=".4" stopColor="#3391cc" />
            <stop offset=".5" stopColor="#2981c4" />
            <stop offset=".7" stopColor="#2066b1" />
            <stop offset=".81" stopColor="#1b5aa4" />
            <stop offset=".86" stopColor="#16457c" />
            <stop offset="1" stopColor="#13375f" />
          </linearGradient>
          <filter id="soft"><feGaussianBlur stdDeviation="2" /></filter>
        </defs>
        <rect width="1366" height="39" fill="url(#tb)" />
        <path d="M860 -8Q940 0 985 45" stroke="#a9d0f8" strokeWidth="8" fill="none" opacity=".75" filter="url(#soft)" />
        <path d="M400 18Q560 32 690 2" stroke="#8ac4ea" strokeWidth="4" fill="none" opacity=".3" filter="url(#soft)" />
        <path d="M240 20Q400 -4 460 42L240 42Z" fill="#7cc4ea" opacity=".22" filter="url(#soft)" />
        <path d="M0 32Q60 18 120 -4" stroke="#8ac4ea" strokeWidth="5" fill="none" opacity=".35" filter="url(#soft)" />
      </svg>
      <div className="relative flex h-full items-stretch border-t border-[#8fbcd8aa]">
        <div className="flex w-[60px] items-center pl-2"><StartOrb /></div>
        <div className="flex w-[54px] items-center justify-center rounded-[3px] border border-[#e6f4fb] bg-[#cfe6f2b0] shadow-[0_0_0_1px_#12395c]"><ExplorerTaskIcon /></div>
        <div className="mr-[4px] w-[4px] rounded-r-[3px] border border-l-0 border-[#cfe6f2] bg-[#a9cfe2a0] shadow-[1px_0_0_#12395c]" />
        <div className="flex w-[59px] items-center justify-center rounded-[3px] border border-[#c4e2f2] bg-[#8cc3df80] shadow-[0_0_0_1px_#12395c]"><Chrome size={28} /></div>
        <div className="ml-[3px] flex w-[59px] items-center justify-center rounded-[3px] border border-[#c4e2f2] bg-[#8cc3df80] shadow-[0_0_0_1px_#12395c]"><SnipIcon /></div>
        <div className="ml-auto flex items-center text-white">
          <svg width="8" height="5" viewBox="0 0 8 5"><path d="M0 5H8L4 .5Z" fill="#fff" /></svg>
          <svg width="16" height="16" viewBox="0 0 16 16" className="ml-[12px]">
            <path d="M5 2.5H2.2V14.3H9.2V11" fill="none" stroke="#fff" strokeWidth="1.5" />
            <path d="M4 1H7V2.5H4Z" fill="#fff" />
            <path d="M5.5 5H13.5V8Q13.5 10.5 10.5 10.5H8.5Q5.5 10.5 5.5 8Z" fill="#fff" />
            <path d="M7.5 2V5M11.5 2V5M9.5 10V14" stroke="#fff" strokeWidth="1.4" />
          </svg>
          <svg width="16" height="16" viewBox="0 0 16 16" className="ml-[9px]">
            <path d="M1 12V15H3V12ZM4.5 10V15H6.5V10ZM8 7V15H10V7ZM11 4.5V15H13V4.5ZM13.8 1V15H15.5V1Z" fill="#5a7ea5" stroke="#0e2848" strokeWidth=".5" />
            <path d="M7.5 7.5L15 15M15 7.5L7.5 15" stroke="#e01e1e" strokeWidth="2" />
          </svg>
          <svg width="16" height="16" viewBox="0 0 16 16" className="ml-[9px]">
            <path d="M2 5.5H4.5L8.5 1.8V14.2L4.5 10.5H2Z" fill="#fff" />
            <path d="M11 5.5Q12.6 8 11 10.5" fill="none" stroke="#fff" strokeWidth="1.2" />
          </svg>
          <svg width="16" height="16" viewBox="0 0 16 16" className="ml-[7px]">
            <path d="M1.8 1V15.4" stroke="#fff" strokeWidth="1.4" />
            <path d="M3 2.2Q6 1 8.5 2.5T14 3V9Q11.5 10 8.8 8.8T3 9Z" fill="#fff" />
            <circle cx="11.2" cy="10.8" r="4.5" fill="#d42a22" stroke="#fff" strokeWidth=".6" />
            <path d="M9.4 9L13 12.6M13 9L9.4 12.6" stroke="#fff" strokeWidth="1.4" />
          </svg>
          <div className="ml-[15px] w-[56px] text-center leading-[17px] tracking-[-0.1px]">
            <div>12:18 PM</div>
            <div>11/7/2012</div>
          </div>
          <div className="ml-[8px] h-full w-[14px] border border-[#7f9dba] bg-linear-to-b from-[#5c7fa5] via-[#1c416e] to-[#2b4f7a]" />
        </div>
      </div>
    </footer>
  );
}

/* ---------- page ---------- */

function ToolItem({ label, w, caret = true }: { label: string; w: string; caret?: boolean }) {
  return (
    <div className={"flex items-center gap-[4px] whitespace-nowrap " + w}>
      {label}
      {caret && <Down />}
    </div>
  );
}

export default function App() {
  return (
    <main className="relative h-[768px] w-[1366px] overflow-hidden bg-[#0f4c94] font-['Open_Sans','Noto_Sans',sans-serif] text-[11.5px] leading-[16px]">
      <ExplorerWindow
        place="left-px"
        tint="[background:linear-gradient(100deg,#4a79bf_0px,#2a63b4_110px,#1557ae_220px,#1a66c0_400px,#2f78c6_580px,#5590cb_670px)_0_0/100%_63px_no-repeat,linear-gradient(90deg,#22a4f6_0px,#35b4f8_120px,#8af4ff_300px,#5fe3ff_420px,#36bcff_560px,#2caeff_681px)_0_100%/100%_6px_no-repeat,linear-gradient(#2e69b5_60px,#1c6fd0_260px,#1fa4f8_440px,#22a4f6_700px)]"
        address={
          <>
            <Folder />
            <svg width="9" height="8" viewBox="0 0 9 8" className="ml-[6px] mr-[7px]">
              <path d="M4 .5L1 4L4 7.5M8 .5L5 4L8 7.5" fill="none" stroke="#222" strokeWidth="1.2" />
            </svg>
            <span className="w-[62px]">templates</span>
            <Play />
            <span className="ml-[8px] w-[73px]">intervention</span>
            <Play />
            <span className="ml-auto pr-[5px]"><Down color="#0b1c66" /></span>
          </>
        }
        search="Search intervention"
        tools={
          <>
            <ToolItem label="Organize" w="w-[90px]" />
            <ToolItem label="Include in library" w="w-[133px]" />
            <ToolItem label="Share with" w="w-[99px]" />
            <ToolItem label="New folder" w="" caret={false} />
          </>
        }
        nav={navRows}
        rows={leftRows}
        scroll
        details={
          <>
            <div className="w-[79px] pl-[19px] pt-[3px]"><BigFolder /></div>
            <div className="pt-[7px] text-[12px]">26 items</div>
          </>
        }
      />
      <div className="absolute left-[19px] top-[9px] h-[26px] w-[36px] rounded-[6px] bg-[#bfe0ff] opacity-80 blur-[4px]" />

      <ExplorerWindow
        place="left-[684px]"
        tint="[background:linear-gradient(100deg,#4b88c9_0px,#2f74c0_120px,#1763b9_240px,#11529f_400px,#124b8d_500px,#3c6ca2_600px,#5c84ad_681px)_0_0/100%_63px_no-repeat,linear-gradient(90deg,#30b0fa_0px,#24a8ff_120px,#7fdcff_200px,#1e90f8_250px,#1a80ea_400px,#165cb4_681px)_0_100%/100%_6px_no-repeat,linear-gradient(90deg,transparent_50%,#1b5fb2_51%),linear-gradient(#3f80c4_60px,#2b86d8_260px,#3aa8ee_440px,#30b0fa_700px)]"
        address={
          <>
            <Folder />
            <svg width="9" height="8" viewBox="0 0 9 8" className="ml-[6px] mr-[7px]">
              <path d="M4 .5L1 4L4 7.5M8 .5L5 4L8 7.5" fill="none" stroke="#222" strokeWidth="1.2" />
            </svg>
            <span className="w-[61px]">LACIE (E:)</span>
            <Play />
            <span className="ml-[8px]">2012-11-07-update</span>
            <span className="ml-auto pr-[5px]"><Down color="#0b1c66" /></span>
          </>
        }
        search="Search 2012-11-07-update"
        tools={
          <>
            <ToolItem label="Organize" w="w-[92px]" />
            <Chrome size={14} />
            <span className="ml-[5px] w-[38px]">Open</span>
            <Down />
            <span className="ml-[31px]">New folder</span>
          </>
        }
        nav={navRows.slice(0, 2)}
        rows={rightRows}
        scroll={false}
        details={
          <>
            <div className="w-[77px] pl-[20px] pt-[5px]"><Chrome size={40} /></div>
            <div className="w-[144px] pt-[6px] leading-[18px]">
              <div className="text-black">activity</div>
              <div className="whitespace-nowrap text-[#5a6779]">Chrome HTML Document</div>
            </div>
            <div className="grid w-[220px] grid-cols-[78px_1fr] content-start gap-x-[4px] pt-[6px] leading-[18px]">
              <span className="whitespace-nowrap text-right text-[#5a6779]">Date modified:</span>
              <span className="tracking-[-0.13px]">{stamp}</span>
              <span className="text-right text-[#5a6779]">Size:</span>
              <span className="tracking-[-0.13px]">9.18 KB</span>
            </div>
            <div className="flex gap-[4px] whitespace-nowrap pt-[6px] leading-[18px]">
              <span className="w-[69px] tracking-[-0.2px] text-[#5a6779]">Date created:</span>
              <span className="tracking-[-0.13px]">{stamp}</span>
            </div>
          </>
        }
      />

      <Taskbar />
      <CopyDialog />
    </main>
  );
}
